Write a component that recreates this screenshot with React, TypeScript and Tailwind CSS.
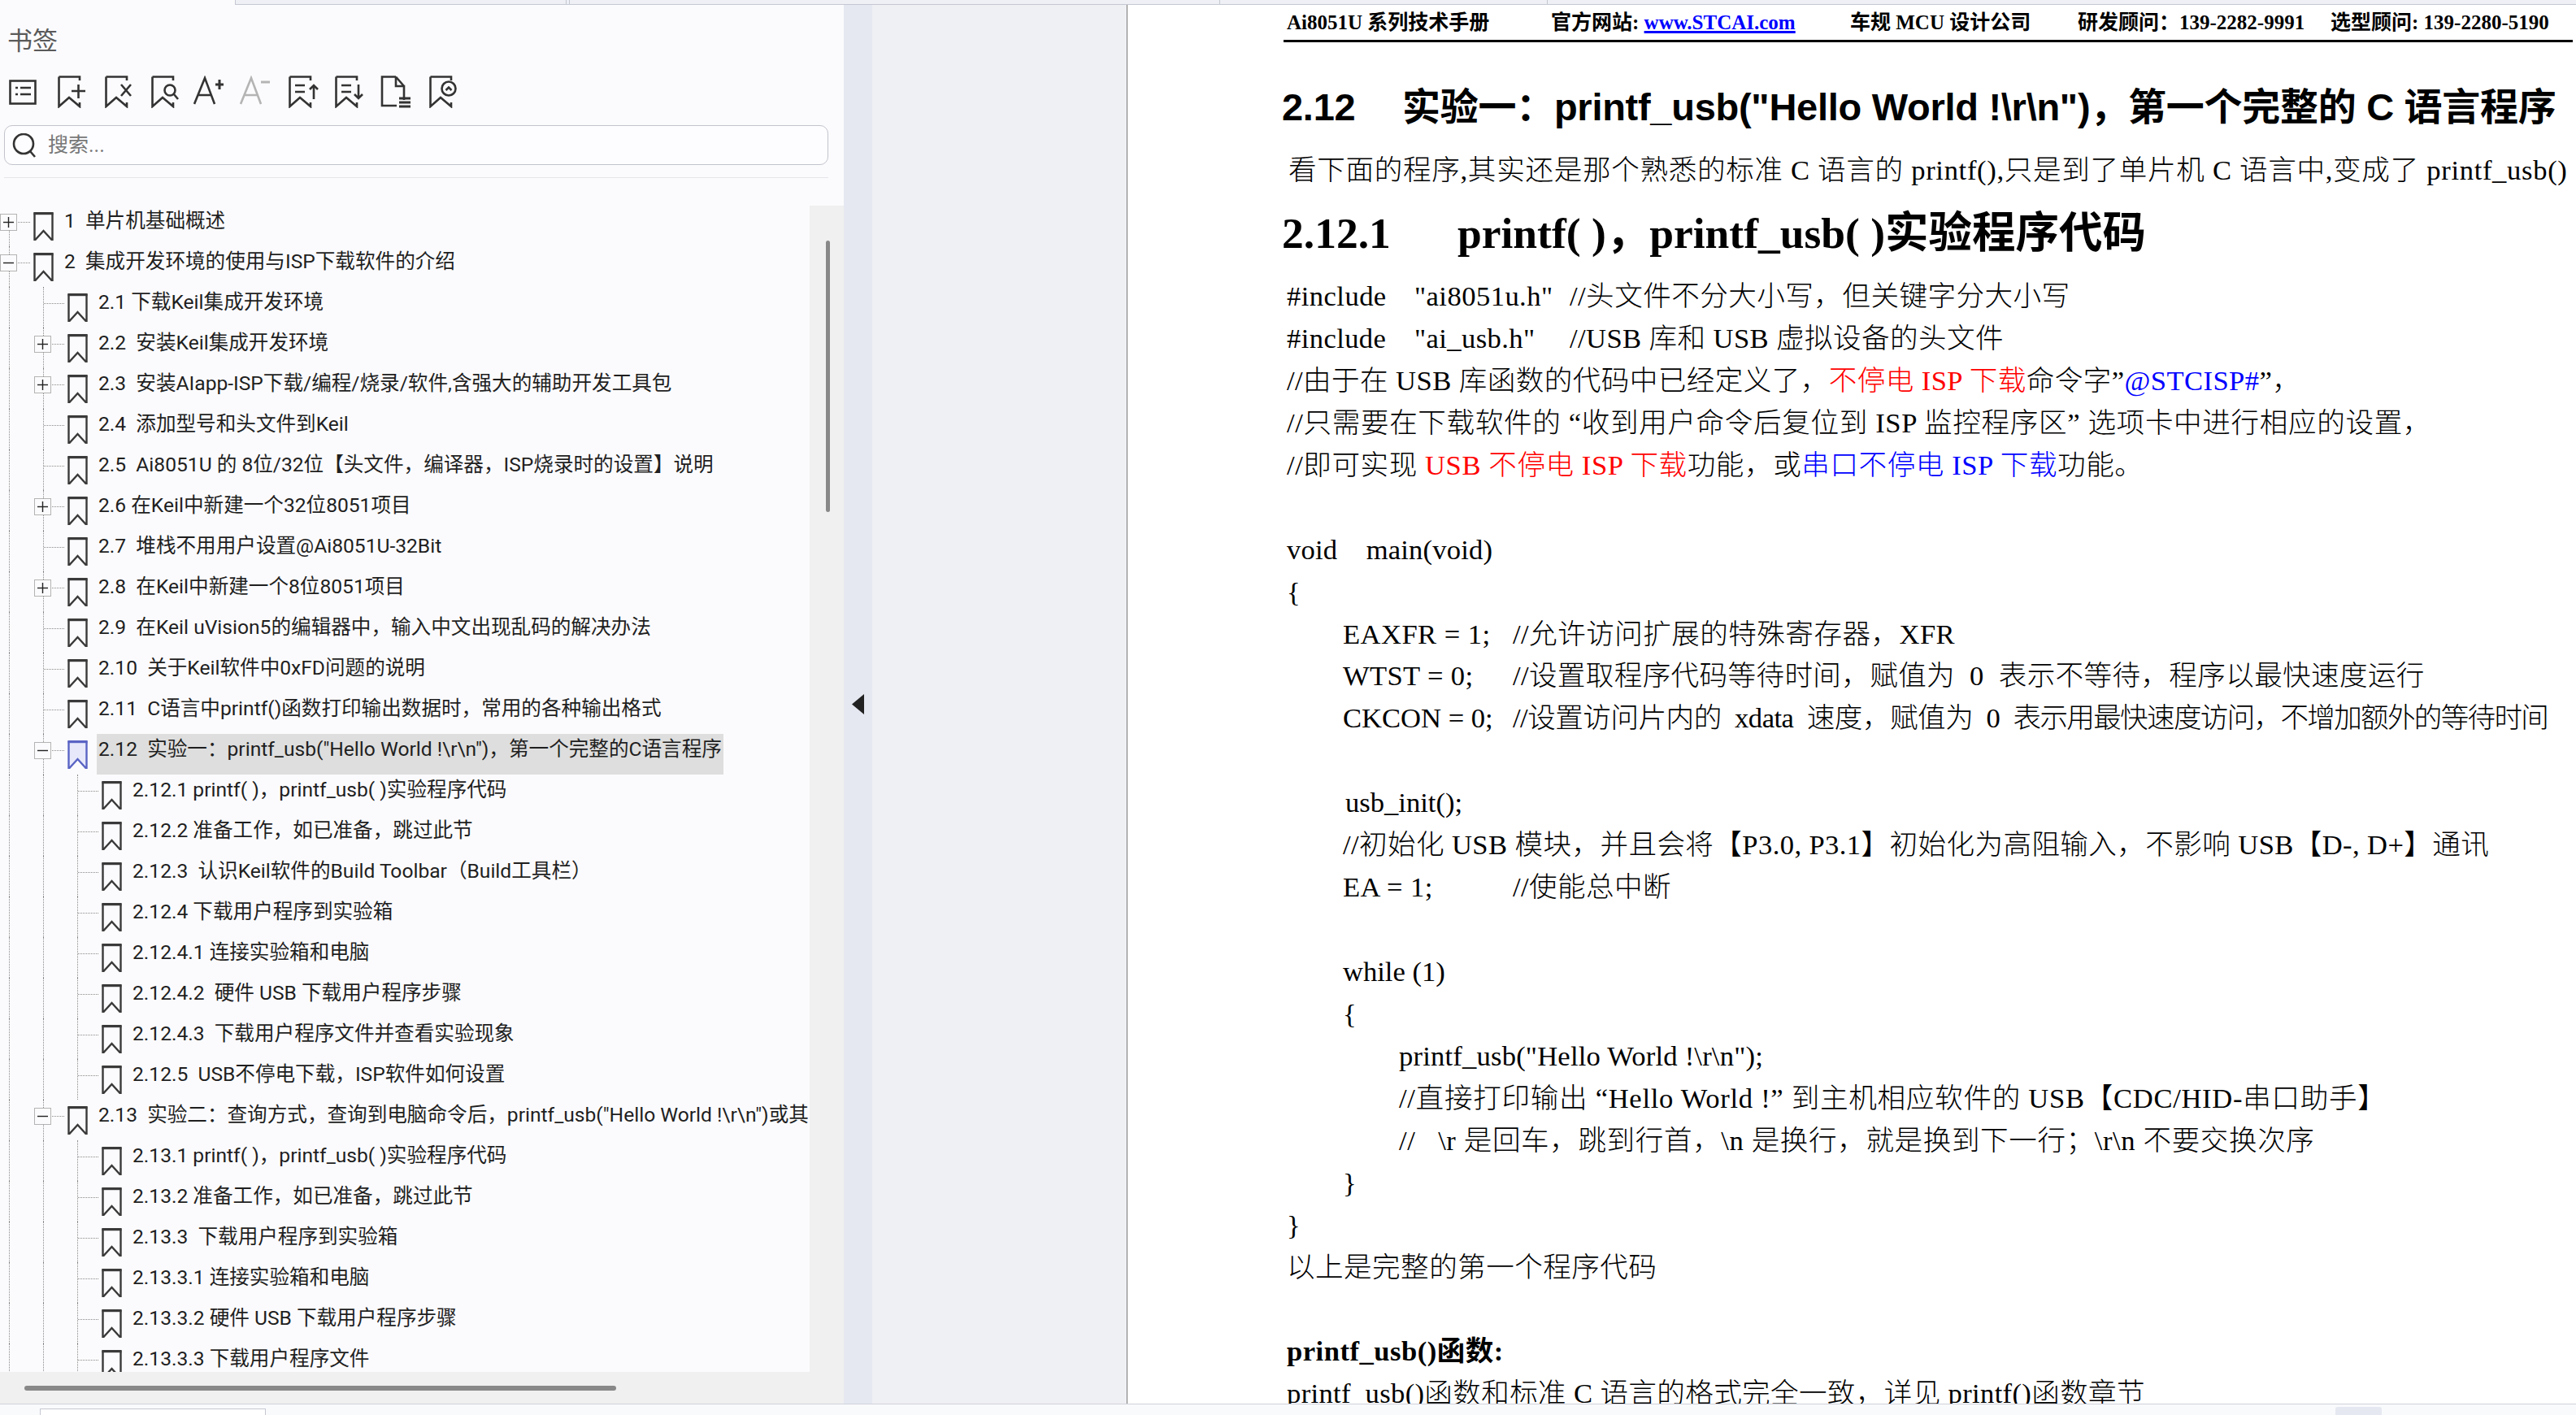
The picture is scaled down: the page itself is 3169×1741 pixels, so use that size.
import type { ReactNode } from "react";

type TreeRow = { level: 0 | 1 | 2; label: string; toggle?: "plus" | "minus"; selected?: boolean };

const rows: TreeRow[] = [
  { level: 0, label: "1  单片机基础概述", toggle: "plus" },
  { level: 0, label: "2  集成开发环境的使用与ISP下载软件的介绍", toggle: "minus" },
  { level: 1, label: "2.1 下载Keil集成开发环境" },
  { level: 1, label: "2.2  安装Keil集成开发环境", toggle: "plus" },
  { level: 1, label: "2.3  安装AIapp-ISP下载/编程/烧录/软件,含强大的辅助开发工具包", toggle: "plus" },
  { level: 1, label: "2.4  添加型号和头文件到Keil" },
  { level: 1, label: "2.5  Ai8051U 的 8位/32位【头文件，编译器，ISP烧录时的设置】说明" },
  { level: 1, label: "2.6 在Keil中新建一个32位8051项目", toggle: "plus" },
  { level: 1, label: "2.7  堆栈不用用户设置@Ai8051U-32Bit" },
  { level: 1, label: "2.8  在Keil中新建一个8位8051项目", toggle: "plus" },
  { level: 1, label: "2.9  在Keil uVision5的编辑器中，输入中文出现乱码的解决办法" },
  { level: 1, label: "2.10  关于Keil软件中0xFD问题的说明" },
  { level: 1, label: "2.11  C语言中printf()函数打印输出数据时，常用的各种输出格式" },
  { level: 1, label: "2.12  实验一：printf_usb(\"Hello World !\\r\\n\")，第一个完整的C语言程序", toggle: "minus", selected: true },
  { level: 2, label: "2.12.1 printf( )，printf_usb( )实验程序代码" },
  { level: 2, label: "2.12.2 准备工作，如已准备，跳过此节" },
  { level: 2, label: "2.12.3  认识Keil软件的Build Toolbar（Build工具栏）" },
  { level: 2, label: "2.12.4 下载用户程序到实验箱" },
  { level: 2, label: "2.12.4.1 连接实验箱和电脑" },
  { level: 2, label: "2.12.4.2  硬件 USB 下载用户程序步骤" },
  { level: 2, label: "2.12.4.3  下载用户程序文件并查看实验现象" },
  { level: 2, label: "2.12.5  USB不停电下载，ISP软件如何设置" },
  { level: 1, label: "2.13  实验二：查询方式，查询到电脑命令后，printf_usb(\"Hello World !\\r\\n\")或其", toggle: "minus" },
  { level: 2, label: "2.13.1 printf( )，printf_usb( )实验程序代码" },
  { level: 2, label: "2.13.2 准备工作，如已准备，跳过此节" },
  { level: 2, label: "2.13.3  下载用户程序到实验箱" },
  { level: 2, label: "2.13.3.1 连接实验箱和电脑" },
  { level: 2, label: "2.13.3.2 硬件 USB 下载用户程序步骤" },
  { level: 2, label: "2.13.3.3 下载用户程序文件" },
];

function ToolIcon({ children, className }: { children: ReactNode; className: string }) {
  return (
    <svg viewBox="0 0 40 40" className={`h-10 w-10 shrink-0 ${className}`} fill="none" stroke="#333" strokeWidth="2.6">
      {children}
    </svg>
  );
}

const mark = "M1.5 1.5H27V6M1.5 1.5V38L14 27L27 38V33";

function Toolbar() {
  return (
    <div className="flex h-10">
      <ToolIcon className="ml-[11px]">
        <rect x="1.5" y="6.5" width="31" height="28" />
        <path d="M8 15h3M14 15h13M8 23h3M14 23h13" />
      </ToolIcon>
      <ToolIcon className="ml-[20px]">
        <path d={mark} />
        <path d="M17 19H34M25.5 11V28" />
      </ToolIcon>
      <ToolIcon className="ml-[18px]">
        <path d={mark} />
        <path d="M20 11L32 25M32 11L20 25" />
      </ToolIcon>
      <ToolIcon className="ml-[17px]">
        <path d={mark} />
        <circle cx="23" cy="18" r="6.5" />
        <path d="M28 23L33 29" />
      </ToolIcon>
      <ToolIcon className="ml-[12px]">
        <path d="M1 35L14 3L26 35M5.5 24H22" />
        <path d="M27 11H37M32 5V17" strokeWidth="3" />
      </ToolIcon>
      <svg viewBox="0 0 40 40" className="ml-[17px] h-10 w-10 shrink-0" fill="none" stroke="#b4b4b4" strokeWidth="2.6">
        <path d="M1 35L14 3L26 35M5.5 24H22" />
        <path d="M26 8H37" strokeWidth="3" />
      </svg>
      <ToolIcon className="ml-[20px]">
        <path d={mark} />
        <path d="M8 12H20M8 20H20M31 29V12M26 17L31 12L36 17" />
      </ToolIcon>
      <ToolIcon className="ml-[17px]">
        <path d={mark} />
        <path d="M8 12H20M8 20H20M29 11V28M24 23L29 28L34 23" />
      </ToolIcon>
      <ToolIcon className="ml-[16px]">
        <path d="M19 1.5H2V37H20" />
        <path d="M19 1.5V13H29V30M19 1.5L29 13" />
        <path d="M23 28H37M23 33H37M23 38H37" strokeWidth="3" />
      </ToolIcon>
      <ToolIcon className="ml-[20px]">
        <path d={mark} />
        <circle cx="24" cy="16" r="8.5" fill="#fbfbfd" />
        <path d="M20.5 18L24 14.5L27.5 18" />
      </ToolIcon>
    </div>
  );
}

function BookmarkIcon({ selected }: { selected?: boolean }) {
  return (
    <svg viewBox="0 0 25 35" className="mt-2 h-[35px] w-[25px] shrink-0" fill="none" stroke={selected ? "#5a64c4" : "#3a3a3a"} strokeWidth="2.4">
      <path d="M1.5 35V1.8H23.5V35L12.5 23L1.5 35Z" fill={selected ? "#e7e9fb" : "none"} />
      <path d="M0.5 1.6H24.5" strokeWidth="3.2" />
    </svg>
  );
}

function Guide({ stub, toggle, first }: { stub?: boolean; toggle?: "plus" | "minus"; first?: boolean }) {
  return (
    <div className="relative h-full w-[42px] shrink-0">
      <div className={`ml-[12px] flex h-full w-[26px] items-start border-l border-dotted border-[#8a8a8a] ${first ? "mt-[20px]" : ""}`}>
        {(stub || toggle) && !first && <div className="mt-[20px] w-full border-t border-dotted border-[#8a8a8a]" />}
        {first && <div className="w-full border-t border-dotted border-[#8a8a8a]" />}
      </div>
      {toggle && (
        <div className="absolute left-[1px] top-[10px] flex h-[21px] w-[21px] items-center justify-center border border-[#b4b4b4] bg-[#fbfbfd]">
          <svg viewBox="0 0 13 13" className="h-[13px] w-[13px]" stroke="#222" strokeWidth="1.4">
            <path d="M0 6.5H13" />
            {toggle === "plus" && <path d="M6.5 0V13" />}
          </svg>
        </div>
      )}
    </div>
  );
}

function Row({ row, first }: { row: TreeRow; first: boolean }) {
  return (
    <div className="-ml-px flex h-[50px] shrink-0">
      {row.level === 0 && <Guide toggle={row.toggle} first={first} />}
      {row.level === 1 && (
        <>
          <Guide />
          <Guide stub={!row.toggle} toggle={row.toggle} />
        </>
      )}
      {row.level === 2 && (
        <>
          <Guide />
          <Guide />
          <Guide stub />
        </>
      )}
      <BookmarkIcon selected={row.selected} />
      <div
        className={`ml-[11px] h-[50px] whitespace-pre px-[2px] text-[24.6px] leading-[38px] text-[#1f1f1f] ${row.selected ? "bg-[#dedede]" : ""}`}
      >
        {row.label}
      </div>
    </div>
  );
}

function Sidebar() {
  return (
    <div className="flex w-[1038px] shrink-0 flex-col bg-[#fbfbfd] font-['Roboto','Noto_Sans_CJK_SC',sans-serif]">
      <div className="h-[87px] pl-[9px] pt-[25px] text-[31px] leading-[40px] text-[#5a5a5a]">书签</div>
      <Toolbar />
      <div className="mx-[5px] mt-[21px] flex h-[49px] w-[1014px] items-center rounded-[10px] border border-[#c2c4cc] bg-[#fdfdff] pl-[9px]">
        <svg viewBox="0 0 30 30" className="h-[30px] w-[30px] shrink-0" fill="none" stroke="#333" strokeWidth="2.6">
          <circle cx="14" cy="13" r="12" />
          <path d="M22 22L28 29" />
        </svg>
        <span className="ml-[14px] text-[25px] text-[#777]">搜索...</span>
      </div>
      <div className="ml-[5px] mt-[15px] h-px w-[1014px] bg-[#e6e6ea]" />
      <div className="mt-[34px] flex h-[1435px] overflow-hidden">
        <div className="flex w-[996px] shrink-0 flex-col overflow-hidden">
          {rows.map((row, i) => (
            <Row key={row.label} row={row} first={i === 0} />
          ))}
        </div>
        <div className="h-full w-[42px] bg-[#f0f0f0] pl-[20px] pt-[43px]">
          <div className="h-[334px] w-[5px] rounded-full bg-[#888]" />
        </div>
      </div>
      <div className="flex h-[39px] items-center bg-[#f0f0f0] pl-[30px]">
        <div className="h-[6px] w-[728px] rounded-full bg-[#888]" />
      </div>
    </div>
  );
}

function Line({ indent = 0, className = "", children }: { indent?: 0 | 1 | 2; className?: string; children?: ReactNode }) {
  const pad = indent === 0 ? "" : indent === 1 ? "pl-[69px]" : "pl-[138px]";
  return <div className={`h-[51.95px] whitespace-pre ${pad} ${className}`}>{children}</div>;
}

function Red({ children }: { children: ReactNode }) {
  return <span className="text-[#ff0000]">{children}</span>;
}

function Blue({ children }: { children: ReactNode }) {
  return <span className="text-[#0000ff]">{children}</span>;
}

function Page() {
  return (
    <div className="flex-1 overflow-hidden border-l border-[#777] bg-white pl-[192px] pr-[4px] font-['Liberation_Serif','Noto_Sans_CJK_SC',serif] text-black">
      <div className="box-content flex h-[42px] items-center border-b-[3px] border-black pl-[4px] pt-px text-[25px] font-bold leading-[30px]">
        <span className="w-[325px] shrink-0 whitespace-pre">Ai8051U 系列技术手册</span>
        <span className="w-[368px] shrink-0 whitespace-pre">
          官方网站: <span className="text-[#0000ff] underline decoration-[3px]">www.STCAI.com</span>
        </span>
        <span className="w-[280px] shrink-0 whitespace-pre">车规 MCU 设计公司</span>
        <span className="w-[311px] shrink-0 whitespace-pre">研发顾问：139-2282-9991</span>
        <span className="shrink-0 whitespace-pre">选型顾问: 139-2280-5190</span>
      </div>
      <h2 className="-ml-[2px] mt-[45px] h-[70px] whitespace-pre font-['Liberation_Sans','Noto_Sans_CJK_SC',sans-serif] text-[47px] font-bold leading-[70px] tracking-[-0.27px]">
        <span className="inline-block w-[148px]">2.12</span>实验一：printf_usb("Hello World !\r\n")，第一个完整的 C 语言程序
      </h2>
      <p className="ml-[6px] mt-[16px] h-[52px] whitespace-pre text-[34.6px] font-light leading-[52px] tracking-[0.68px]">
        看下面的程序,其实还是那个熟悉的标准 C 语言的 printf(),只是到了单片机 C 语言中,变成了 printf_usb()
      </p>
      <h3 className="-ml-[2px] mt-[17px] h-[70px] whitespace-pre text-[53.5px] font-bold leading-[70px]">
        <span className="inline-block w-[216px]">2.12.1</span>printf( )，printf_usb( )实验程序代码
      </h3>
      <div className="ml-[4px] mt-[17px] text-[34.6px] font-light leading-[51.95px]">
        <Line className="tracking-[0.45px]">
          <span className="inline-block w-[157px]">#include</span>
          <span className="inline-block w-[191px]">"ai8051u.h"</span>//头文件不分大小写，但关键字分大小写
        </Line>
        <Line className="tracking-[0.4px]">
          <span className="inline-block w-[157px]">#include</span>
          <span className="inline-block w-[191px]">"ai_usb.h"</span>//USB 库和 USB 虚拟设备的头文件
        </Line>
        <Line className="tracking-[0.42px]">
          //由于在 USB 库函数的代码中已经定义了，<Red>不停电 ISP 下载</Red>命令字”<Blue>@STCISP#</Blue>”，
        </Line>
        <Line className="tracking-[0.64px]">//只需要在下载软件的 “收到用户命令后复位到 ISP 监控程序区” 选项卡中进行相应的设置，</Line>
        <Line className="tracking-[0.56px]">
          //即可实现 <Red>USB 不停电 ISP 下载</Red>功能，或<Blue>串口不停电 ISP 下载</Blue>功能。
        </Line>
        <Line />
        <Line className="tracking-[0.2px]">void{"    "}main(void)</Line>
        <Line>{"{"}</Line>
        <Line indent={1} className="tracking-[0.45px]">
          <span className="inline-block w-[209px]">EAXFR = 1;</span>//允许访问扩展的特殊寄存器，XFR
        </Line>
        <Line indent={1} className="tracking-[0.36px]">
          <span className="inline-block w-[209px]">WTST = 0;</span>//设置取程序代码等待时间，赋值为{"  "}0{"  "}表示不等待，程序以最快速度运行
        </Line>
        <Line indent={1}>
          <span className="inline-block w-[209px]">CKCON = 0;</span>
          <span className="tracking-[-0.5px]">//设置访问片内的{"  "}xdata{"  "}速度，赋值为{"  "}0{"  "}</span>
          <span className="tracking-[-1.7px]">表示用最快速度访问，不增加额外的等待时间</span>
        </Line>
        <Line />
        <Line indent={1}>
          <span className="ml-[3px]">usb_init();</span>
        </Line>
        <Line indent={1} className="tracking-[0.4px]">//初始化 USB 模块，并且会将【P3.0, P3.1】初始化为高阻输入，不影响 USB【D-, D+】通讯</Line>
        <Line indent={1} className="tracking-[0.4px]">
          <span className="inline-block w-[209px]">EA = 1;</span>//使能总中断
        </Line>
        <Line />
        <Line indent={1}>while (1)</Line>
        <Line indent={1}>{"{"}</Line>
        <Line indent={2} className="tracking-[0.2px]">printf_usb("Hello World !\r\n");</Line>
        <Line indent={2} className="tracking-[0.7px]">//直接打印输出 “Hello World !” 到主机相应软件的 USB【CDC/HID-串口助手】</Line>
        <Line indent={2} className="tracking-[0.6px]">//{"   "}\r 是回车，跳到行首，\n 是换行，就是换到下一行；\r\n 不要交换次序</Line>
        <Line indent={1}>{"}"}</Line>
        <Line>{"}"}</Line>
        <Line className="tracking-[0.45px]">以上是完整的第一个程序代码</Line>
        <Line />
        <Line className="tracking-[0.5px]">
          <span className="font-bold">printf_usb()函数:</span>
        </Line>
        <Line className="tracking-[0.35px]">printf_usb()函数和标准 C 语言的格式完全一致，详见 printf()函数章节</Line>
      </div>
    </div>
  );
}

export default function App() {
  return (
    <div className="flex h-[1741px] w-[3169px] flex-col overflow-hidden bg-white">
      {/* tab strip, only its lower edge is on screen */}
      <div className="flex h-[6px] shrink-0">
        <div className="w-[289px] bg-[#fbfbfd]" />
        <div className="flex flex-1 border-b border-[#c5c8d2] bg-[#eef0f5]">
          <div className="w-[408px] border-x border-[#c5c8d2]" />
          <div className="ml-[3px] w-[801px] border-x border-[#c5c8d2]" />
          <div className="ml-[3px] w-[400px] border-r border-[#c5c8d2]" />
        </div>
      </div>

      <div className="flex min-h-0 flex-1">
        <Sidebar />
        <div className="flex w-[35px] shrink-0 items-center bg-[#e5e8f1] pl-[10px]">
          <svg viewBox="0 0 15 25" className="h-[25px] w-[15px]">
            <polygon points="15,0 0,12.5 15,25" fill="#222" />
          </svg>
        </div>
        <div className="w-[313px] shrink-0 bg-[#eff0f4]" />
        <Page />
      </div>

      <div className="flex h-[14px] shrink-0 items-end border-t border-[#cfd2dc] bg-[#f9fafc]">
        <div className="ml-[49px] h-[8px] w-[278px] border-x border-t border-[#c5c8d2] bg-white" />
        <div className="ml-[2546px] h-[10px] w-[57px] rounded-t-[3px] bg-[#e6e8f1]" />
      </div>
    </div>
  );
}
